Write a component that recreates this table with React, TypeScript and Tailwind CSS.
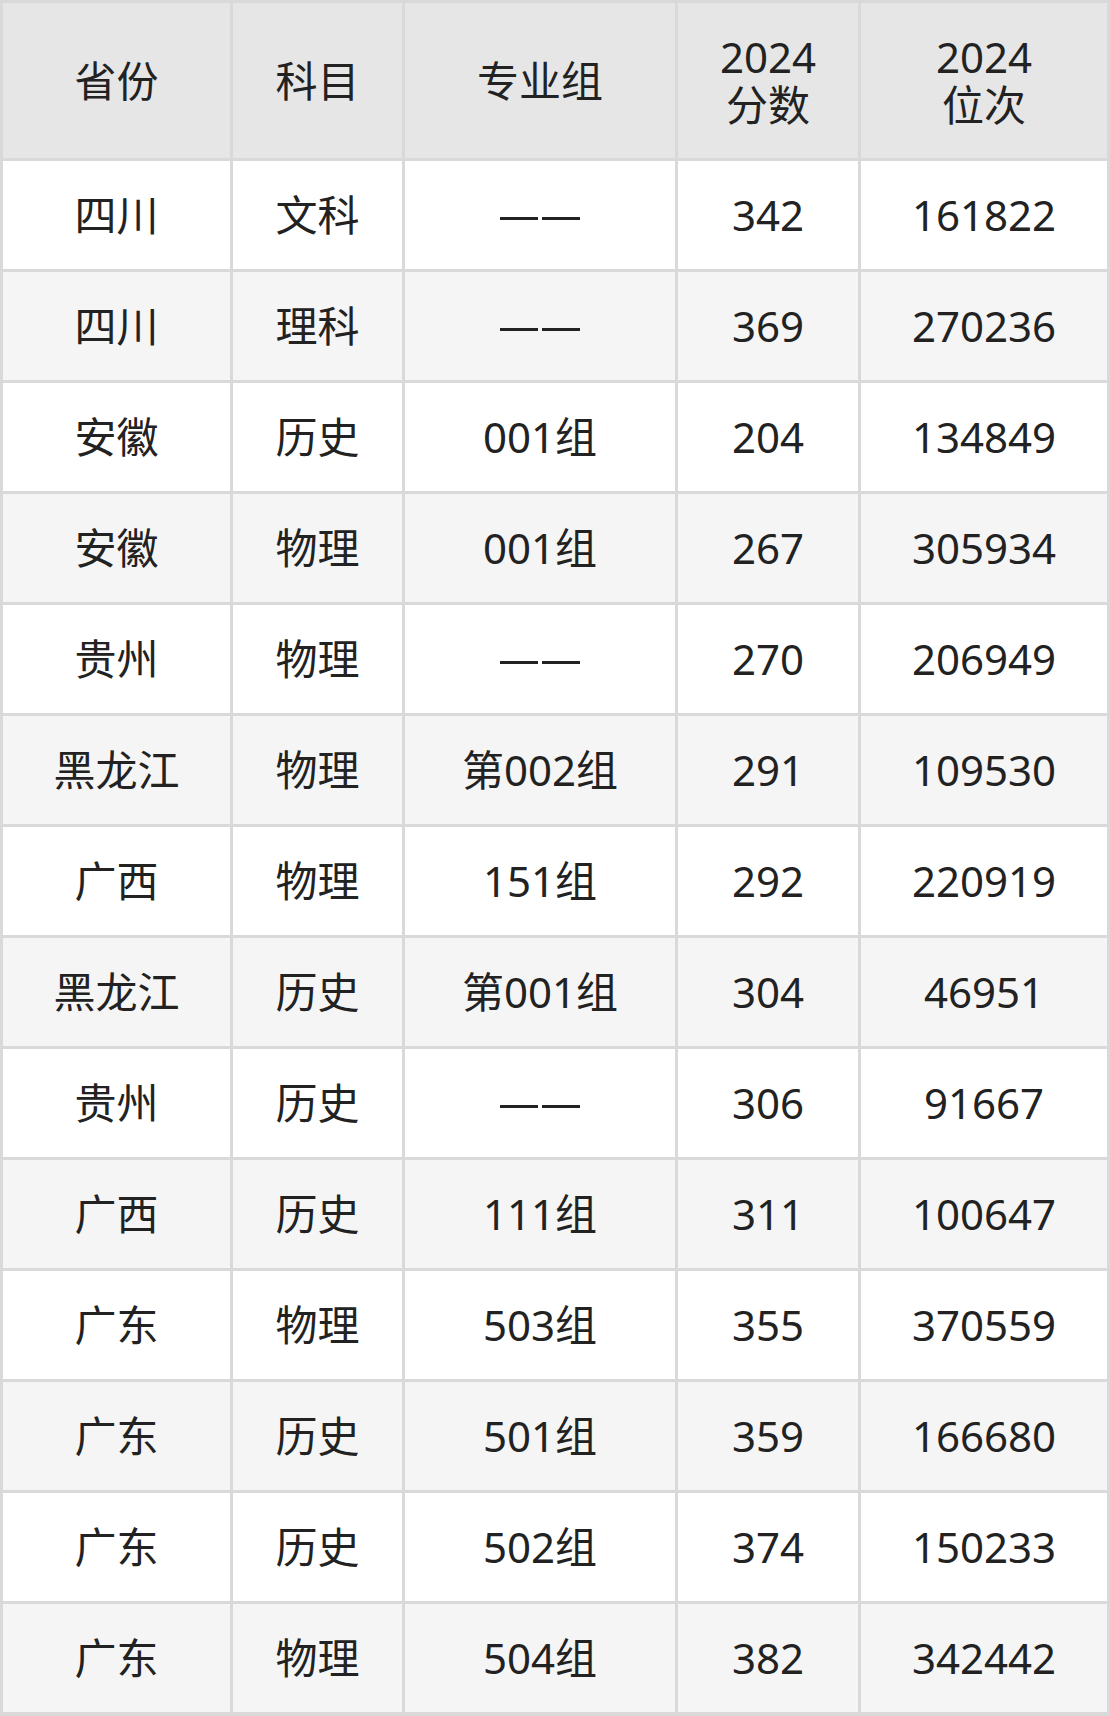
const rows: [string, string, string, string, string][] = [
  ["四川", "文科", "——", "342", "161822"],
  ["四川", "理科", "——", "369", "270236"],
  ["安徽", "历史", "001组", "204", "134849"],
  ["安徽", "物理", "001组", "267", "305934"],
  ["贵州", "物理", "——", "270", "206949"],
  ["黑龙江", "物理", "第002组", "291", "109530"],
  ["广西", "物理", "151组", "292", "220919"],
  ["黑龙江", "历史", "第001组", "304", "46951"],
  ["贵州", "历史", "——", "306", "91667"],
  ["广西", "历史", "111组", "311", "100647"],
  ["广东", "物理", "503组", "355", "370559"],
  ["广东", "历史", "501组", "359", "166680"],
  ["广东", "历史", "502组", "374", "150233"],
  ["广东", "物理", "504组", "382", "342442"],
]

const headers: string[][] = [["省份"], ["科目"], ["专业组"], ["2024", "分数"], ["2024", "位次"]]

export default function App() {
  return (
    <div
      className="w-[1110px] bg-white text-[#222222]"
      style={{ fontFamily: '"Noto Sans", "Noto Sans CJK SC", sans-serif' }}
    >
      <div className="grid grid-cols-[227px_169px_270px_180px_246px] grid-rows-[155px_repeat(14,108px)] gap-[3px] bg-[#d9d9d9] pt-[3px] pb-[4px] px-[3px]">
        {headers.map((h, i) => (
          <div
            key={i}
            className="flex flex-col items-center justify-center bg-[#e6e6e6] text-[42px] leading-[48px]"
          >
            {h.map((line) => (
              <span key={line}>{line}</span>
            ))}
          </div>
        ))}
        {rows.map((r, ri) =>
          r.map((cell, ci) => (
            <div
              key={`${ri}-${ci}`}
              className={`flex items-center justify-center text-[42px] leading-none ${
                ri % 2 === 0 ? "bg-white" : "bg-[#f5f5f5]"
              }`}
            >
              {cell === "——" ? (
                <span className="flex gap-[4px] pt-[6px]">
                  <span className="block h-[3px] w-[38px] bg-[#222222]" />
                  <span className="block h-[3px] w-[38px] bg-[#222222]" />
                </span>
              ) : (
                cell
              )}
            </div>
          ))
        )}
      </div>
    </div>
  )
}
